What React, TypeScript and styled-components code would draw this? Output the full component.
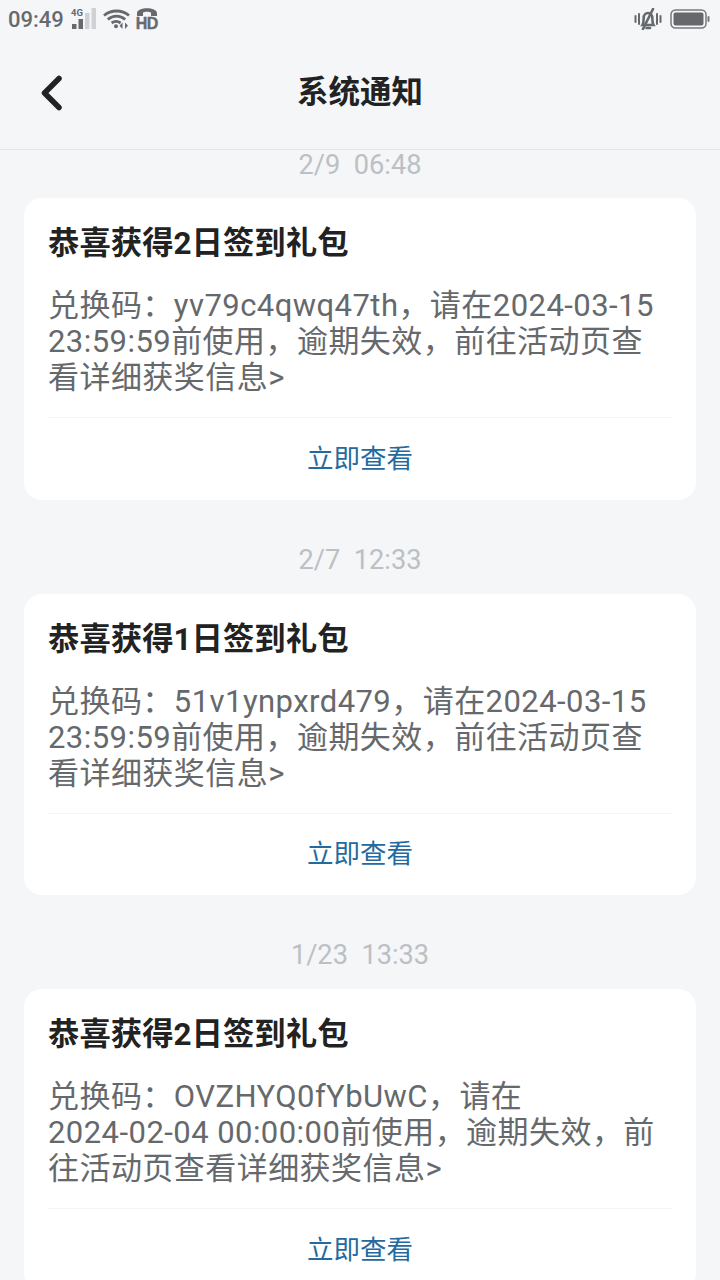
import React from "react";
import styled, { createGlobalStyle } from "styled-components";

const Global = createGlobalStyle`
  html, body { margin: 0; padding: 0; background: #f4f6f8; }
  body { width: 720px; height: 1280px; overflow: hidden; font-family: Roboto, "Noto Sans CJK SC", sans-serif; }
`;
const Page = styled.div`
  width: 720px; height: 1280px; overflow: hidden; background: #f4f6f8;
  display: flex; flex-direction: column;
`;
const StatusBar = styled.div`
  height: 37px; flex: none; padding: 0 10px 0 9px; display: flex; align-items: center; justify-content: space-between;
  color: #666a6e;
`;
const StatusGroup = styled.div`display: flex; align-items: center; gap: ${p => p.$gap}px;`;
const Clock = styled.span`font-size: 22px; font-weight: 500; line-height: 35px; padding-top: 2px; margin-left: -1px;`;
const HdBadge = styled.div`
  width: 22px; display: flex; flex-direction: column; align-items: center; gap: 1px; color: #666a6e;
`;
const HdText = styled.span`
  font-family: "Liberation Sans", sans-serif; font-size: 16px; font-weight: 700; line-height: 13px;
  letter-spacing: -0.6px; -webkit-text-stroke: 0.4px #666a6e;
`;
const Header = styled.header`
  height: 113px; flex: none; display: grid; grid-template-columns: 1fr auto 1fr; align-items: center;
  border-bottom: 1px solid #e1e3e6; padding: 0 38px 1px; box-sizing: border-box;
`;
const Back = styled.svg`display: block;`;
const Title = styled.h1`margin: 0; font-size: 31.5px; font-weight: 700; color: #222; line-height: 40px;`;
const List = styled.main`display: flex; flex-direction: column; padding: 0 24px;`;
const Stamp = styled.div`
  height: 48px; line-height: ${p => (p.$first ? 30 : 28)}px; text-align: center; font-size: 27.2px; color: #bcc0c4;
  white-space: pre; margin-top: ${p => (p.$first ? 0 : 46)}px; flex: none;
`;
const Card = styled.article`
  height: 301.5px; flex: none; background: #fff; border-radius: 18px; padding: 0 24px;
  box-sizing: border-box; display: flex; flex-direction: column;
`;
const CardTitle = styled.h2`margin: 26px 0 0; font-size: 31.4px; font-weight: 700; line-height: 40px; color: #222;`;
const Body = styled.p`
  margin: 24px 0 0; font-size: 31px; letter-spacing: 0.45px; line-height: 36px; color: #66696c; height: 108px;
`;
const Line = styled.span`display: block; white-space: nowrap;`;
const Action = styled.div`
  margin-top: 21px; border-top: 1px solid #f3f4f6; flex: 1; display: flex; align-items: center; justify-content: center;
  color: #246a9f; font-size: 26.5px; line-height: 40px;
`;

const notices = [
  { when: "2/9  06:48", title: "恭喜获得2日签到礼包", lines: ["兑换码：yv79c4qwq47th，请在2024-03-15", "23:59:59前使用，逾期失效，前往活动页查", "看详细获奖信息>"] },
  { when: "2/7  12:33", title: "恭喜获得1日签到礼包", lines: ["兑换码：51v1ynpxrd479，请在2024-03-15", "23:59:59前使用，逾期失效，前往活动页查", "看详细获奖信息>"] },
  { when: "1/23  13:33", title: "恭喜获得2日签到礼包", lines: ["兑换码：OVZHYQ0fYbUwC，请在", "2024-02-04 00:00:00前使用，逾期失效，前", "往活动页查看详细获奖信息>"] },
];

const Signal = () => (
  <svg width="27" height="22" viewBox="0 0 27 22" fill="#666a6e">
    <text x="1" y="8" fontSize="9.5" fontWeight="700" fontFamily="Roboto">4G</text>
    <rect x="2" y="16" width="4.5" height="5" />
    <rect x="8.5" y="11" width="4.5" height="10" />
    <rect x="15" y="5" width="4.5" height="16" fill="#cfd1d4" />
    <rect x="21.5" y="0" width="4.5" height="21" fill="#cfd1d4" />
  </svg>
);
const Wifi = () => (
  <svg width="27" height="20" viewBox="0 0 27 20" fill="none" stroke="#666a6e" strokeWidth="2.8">
    <path d="M1 6.5C8 0.5 19 0.5 26 6.5" />
    <path d="M4.8 10.5C10 6 17 6 22.2 10.5" />
    <path d="M8.6 14c3-2.2 6-2.2 9 0" />
    <circle cx="13" cy="17.3" r="2" fill="#666a6e" stroke="none" />
    <path d="M19.5 13.5v6.5l-3-3.2zM22 13.5v6.5l3-3.2z" fill="#666a6e" stroke="none" />
  </svg>
);
const Hd = () => (
  <HdBadge>
    <svg width="20" height="8" viewBox="0 0 20 8" fill="#666a6e">
      <path d="M0 8V5C0 -1.5 20 -1.5 20 5v3h-6V4.5c-2-1-6-1-8 0V8z" />
    </svg>
    <HdText>HD</HdText>
  </HdBadge>
);
const Mute = () => (
  <svg width="28" height="22" viewBox="0 0 28 22" fill="none" stroke="#666a6e" strokeWidth="2.6" strokeLinecap="round">
    <path d="M8.5 17c1.2-2 1.2-4 1.2-7 0-3 2-5 4.3-5s4.3 2 4.3 5c0 3 0 5 1.2 7z" />
    <path d="M19 1 9 21" />
    <path d="M12.5 20h3.5" />
    <path d="M1.5 8v6M5 6v10M23 6v10M26.5 8v6" strokeWidth="2" />
  </svg>
);
const Battery = () => (
  <svg width="40" height="20" viewBox="0 0 40 20">
    <rect x="1" y="1" width="35" height="18" rx="4.5" fill="none" stroke="#77797c" strokeWidth="1.5" />
    <rect x="3.5" y="3.5" width="30" height="13" rx="2" fill="#66686b" />
    <rect x="37.5" y="7" width="2" height="6" rx="1" fill="#77797c" />
  </svg>
);

export default function App() {
  return (
    <Page>
      <Global />
      <StatusBar>
        <StatusGroup $gap={6}>
          <Clock>09:49</Clock>
          <Signal />
          <Wifi />
          <Hd />
        </StatusGroup>
        <StatusGroup $gap={8}>
          <Mute />
          <Battery />
        </StatusGroup>
      </StatusBar>
      <Header>
        <Back width="28" height="36" viewBox="0 0 28 36" fill="none" stroke="#222" strokeWidth="5.5" strokeLinecap="round" strokeLinejoin="round">
          <path d="M21 3.5 6.5 18 21 32.5" />
        </Back>
        <Title>系统通知</Title>
        <span />
      </Header>
      <List>
        {notices.map((n, i) => (
          <React.Fragment key={i}>
            <Stamp $first={i === 0}>{n.when}</Stamp>
            <Card>
              <CardTitle>{n.title}</CardTitle>
              <Body>{n.lines.map(l => <Line key={l}>{l}</Line>)}</Body>
              <Action>立即查看</Action>
            </Card>
          </React.Fragment>
        ))}
      </List>
    </Page>
  );
}
